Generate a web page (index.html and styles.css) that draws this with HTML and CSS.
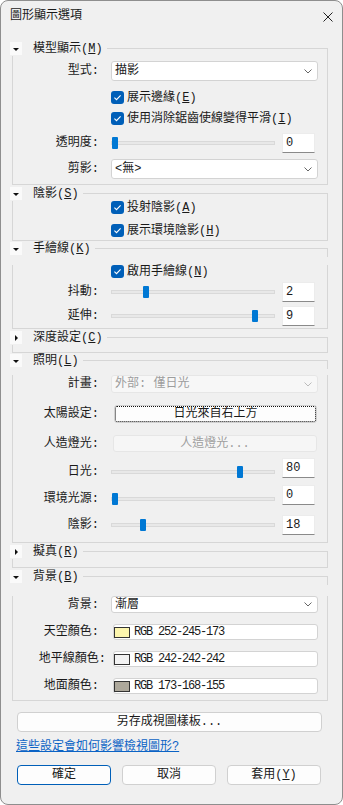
FILE: index.html
```html
<!DOCTYPE html>
<html lang="zh-Hant">
<head>
  <meta charset="UTF-8" />
  <meta name="viewport" content="width=device-width, initial-scale=1.0"/>
  <title>圖形顯示選項</title>
  <link rel="stylesheet" href="styles.css">
</head>
<body>
  <div class="win">
    <!-- 標題列 -->
    <div class="titlebar">
      <span>圖形顯示選項</span>
      <svg class="close" width="10" height="10" viewBox="0 0 10 10"><path d="M0.5 0.5 L9.5 9.5 M9.5 0.5 L0.5 9.5" stroke="#222" stroke-width="1"/></svg>
    </div>

    <div class="content">
      <!-- 模型顯示 -->
      <section class="grp g1">
        <div class="grp-head">
          <span class="twisty"><i class="tri-down"></i></span>
          <span class="grp-title">模型顯示(<u>M</u>)</span>
          <span class="grp-line"></span>
        </div>
        <div class="grp-body">
          <div class="row h20">
            <span class="lbl">型式:</span>
            <div class="combo">描影<svg class="chev" width="8" height="5" viewBox="0 0 8 5"><path d="M0.5 0.5 L4 4 L7.5 0.5" fill="none" stroke="#666"/></svg></div>
          </div>
          <div class="row chk mt10">
            <span class="cb"><svg width="13" height="13" viewBox="0 0 13 13"><path d="M3.4 6.7 L5.5 8.7 L9.6 4.3" fill="none" stroke="#fff" stroke-width="1.1"/></svg></span>
            展示邊緣(<u>E</u>)
          </div>
          <div class="row chk mt8">
            <span class="cb"><svg width="13" height="13" viewBox="0 0 13 13"><path d="M3.4 6.7 L5.5 8.7 L9.6 4.3" fill="none" stroke="#fff" stroke-width="1.1"/></svg></span>
            使用消除鋸齒使線變得平滑(<u>I</u>)
          </div>
          <div class="row h20 mt8">
            <span class="lbl">透明度:</span>
            <div class="slider"><div class="track"></div><div class="thumb" style="--v:0"></div></div>
            <div class="num">0</div>
          </div>
          <div class="row h20 mt6">
            <span class="lbl">剪影:</span>
            <div class="combo">&lt;無&gt;<svg class="chev" width="8" height="5" viewBox="0 0 8 5"><path d="M0.5 0.5 L4 4 L7.5 0.5" fill="none" stroke="#666"/></svg></div>
          </div>
        </div>
      </section>

      <!-- 陰影 -->
      <section class="grp g2">
        <div class="grp-head">
          <span class="twisty"><i class="tri-down"></i></span>
          <span class="grp-title">陰影(<u>S</u>)</span>
          <span class="grp-line"></span>
        </div>
        <div class="grp-body">
          <div class="row chk">
            <span class="cb"><svg width="13" height="13" viewBox="0 0 13 13"><path d="M3.4 6.7 L5.5 8.7 L9.6 4.3" fill="none" stroke="#fff" stroke-width="1.1"/></svg></span>
            投射陰影(<u>A</u>)
          </div>
          <div class="row chk mt10">
            <span class="cb"><svg width="13" height="13" viewBox="0 0 13 13"><path d="M3.4 6.7 L5.5 8.7 L9.6 4.3" fill="none" stroke="#fff" stroke-width="1.1"/></svg></span>
            展示環境陰影(<u>H</u>)
          </div>
        </div>
      </section>

      <!-- 手繪線 -->
      <section class="grp g3">
        <div class="grp-head">
          <span class="twisty"><i class="tri-down"></i></span>
          <span class="grp-title">手繪線(<u>K</u>)</span>
          <span class="grp-line"></span>
        </div>
        <div class="grp-body">
          <div class="row chk mt9">
            <span class="cb"><svg width="13" height="13" viewBox="0 0 13 13"><path d="M3.4 6.7 L5.5 8.7 L9.6 4.3" fill="none" stroke="#fff" stroke-width="1.1"/></svg></span>
            啟用手繪線(<u>N</u>)
          </div>
          <div class="row h20 mt4">
            <span class="lbl">抖動:</span>
            <div class="slider"><div class="track"></div><div class="thumb" style="--v:0.2"></div></div>
            <div class="num">2</div>
          </div>
          <div class="row h20 mt4">
            <span class="lbl">延伸:</span>
            <div class="slider"><div class="track"></div><div class="thumb" style="--v:0.9"></div></div>
            <div class="num">9</div>
          </div>
        </div>
      </section>

      <!-- 深度設定 (收合) -->
      <section class="grp g4">
        <div class="grp-head">
          <span class="twisty"><i class="tri-right"></i></span>
          <span class="grp-title">深度設定(<u>C</u>)</span>
          <span class="grp-line"></span>
        </div>
        <div class="grp-body empty"></div>
      </section>

      <!-- 照明 -->
      <section class="grp g5">
        <div class="grp-head">
          <span class="twisty"><i class="tri-down"></i></span>
          <span class="grp-title">照明(<u>L</u>)</span>
          <span class="grp-line"></span>
        </div>
        <div class="grp-body">
          <div class="row h18 mt7">
            <span class="lbl">計畫:</span>
            <div class="combo off">外部: 僅日光<svg class="chev" width="8" height="5" viewBox="0 0 8 5"><path d="M0.5 0.5 L4 4 L7.5 0.5" fill="none" stroke="#bbb"/></svg></div>
          </div>
          <div class="row h18 mt12">
            <span class="lbl">太陽設定:</span>
            <div class="btn focus">日光來自右上方</div>
          </div>
          <div class="row h17 mt12">
            <span class="lbl">人造燈光:</span>
            <div class="btn off">人造燈光...</div>
          </div>
          <div class="row mt6">
            <span class="lbl">日光:</span>
            <div class="slider"><div class="track"></div><div class="thumb" style="--v:0.8"></div></div>
            <div class="num up8">80</div>
          </div>
          <div class="row mt-1">
            <span class="lbl">環境光源:</span>
            <div class="slider"><div class="track"></div><div class="thumb" style="--v:0"></div></div>
            <div class="num up7">0</div>
          </div>
          <div class="row h20 mt3">
            <span class="lbl">陰影:</span>
            <div class="slider"><div class="track"></div><div class="thumb" style="--v:0.18"></div></div>
            <div class="num">18</div>
          </div>
        </div>
      </section>

      <!-- 擬真 (收合) -->
      <section class="grp g6">
        <div class="grp-head">
          <span class="twisty"><i class="tri-right"></i></span>
          <span class="grp-title">擬真(<u>R</u>)</span>
          <span class="grp-line"></span>
        </div>
        <div class="grp-body empty"></div>
      </section>

      <!-- 背景 -->
      <section class="grp g7">
        <div class="grp-head">
          <span class="twisty"><i class="tri-down"></i></span>
          <span class="grp-title">背景(<u>B</u>)</span>
          <span class="grp-line"></span>
        </div>
        <div class="grp-body">
          <div class="row h17 mt12">
            <span class="lbl">背景:</span>
            <div class="combo">漸層<svg class="chev" width="8" height="5" viewBox="0 0 8 5"><path d="M0.5 0.5 L4 4 L7.5 0.5" fill="none" stroke="#666"/></svg></div>
          </div>
          <div class="row h16 mt11">
            <span class="lbl">天空顏色:</span>
            <div class="color"><span class="sw" style="background:rgb(252,245,173)"></span>RGB 252-245-173</div>
          </div>
          <div class="row h16 mt11">
            <span class="lbl over">地平線顏色:</span>
            <div class="color"><span class="sw" style="background:rgb(242,242,242)"></span>RGB 242-242-242</div>
          </div>
          <div class="row h16 mt11">
            <span class="lbl">地面顏色:</span>
            <div class="color"><span class="sw" style="background:rgb(173,168,155)"></span>RGB 173-168-155</div>
          </div>
        </div>
      </section>

      <div class="btn save">另存成視圖樣板...</div>
      <a class="help" href="#">這些設定會如何影響檢視圖形?</a>

      <div class="actions">
        <div class="btn primary">確定</div>
        <div class="btn">取消</div>
        <div class="btn">套用(<u>Y</u>)</div>
      </div>
    </div>
  </div>
</body>
</html>
```

FILE: styles.css
```css
:root {
  --bg: #f0f0f0;
  --line: #d6d6d6;
  --blue: #005fb8;
  --thumb: #0078d4;
  --text: #1a1a1a;
}
body {
  margin: 0;
  font-family: "Liberation Mono", "Noto Sans CJK TC", monospace;
  font-size: 12px;
  line-height: 14px;
  color: var(--text);
  background: #fff;
}
u {
  text-decoration: underline;
  text-underline-offset: 1px;
}
/* 視窗外框 */
.win {
  width: 343px;
  height: 805px;
  box-sizing: border-box;
  border: 1px solid #8e8e8e;
  border-radius: 8px;
  background: var(--bg);
  overflow: hidden;
}
.titlebar {
  height: 30px;
  display: flex;
  align-items: center;
  justify-content: space-between;
  padding: 0 9px 0 9px;
  font-size: 12px;
}
.close {
  margin-top: 2px;
}
.content {
  padding: 11px 14px 0 11px;
}
/* 群組框 */
.grp.g2, .grp.g4, .grp.g6, .grp.g7 { margin-top: 2px; }
.grp.g3, .grp.g5 { margin-top: 1px; }
.grp-head {
  display: flex;
  align-items: flex-start;
  height: 14px;
  margin-left: -2px;
}
.twisty {
  width: 12px;
  height: 13px;
  background: #fafafa;
  display: flex;
  align-items: center;
  justify-content: center;
}
.tri-down {
  width: 0;
  height: 0;
  border-left: 3px solid transparent;
  border-right: 3px solid transparent;
  border-top: 3px solid #111;
  margin-top: 2px;
}
.tri-right {
  width: 0;
  height: 0;
  border-top: 3px solid transparent;
  border-bottom: 3px solid transparent;
  border-left: 3px solid #111;
  margin-left: 1px;
}
.grp-title {
  margin-left: 11px;
  white-space: nowrap;
}
.grp-line {
  flex: 1;
  margin-left: 4px;
  margin-top: 6px;
  height: 8px;
  border-top: 1px solid var(--line);
  border-right: 1px solid var(--line);
}
.grp-body {
  border: 1px solid var(--line);
  border-top: none;
}
.g1 .grp-body { padding: 5px 0 5px 0; }
.g2 .grp-body { padding: 0 0 3px 0; }
.g3 .grp-body { padding: 0 0 2px 0; }
.g5 .grp-body { padding: 0 0 7px 0; }
.g7 .grp-body { padding: 0 0 6px 0; }
.g4 .grp-body.empty { height: 7px; }
.g6 .grp-body.empty { height: 8px; }

/* 列 */
.row {
  display: flex;
  align-items: center;
  padding-right: 9px;
}
.h20 { height: 20px; }
.h18 { height: 18px; }
.h17 { height: 17px; }
.h16 { height: 16px; }
.mt3 { margin-top: 3px; }
.mt4 { margin-top: 4px; }
.mt6 { margin-top: 6px; }
.mt7 { margin-top: 7px; }
.mt8 { margin-top: 8px; }
.mt9 { margin-top: 9px; }
.mt10 { margin-top: 10px; }
.mt11 { margin-top: 11px; }
.mt12 { margin-top: 12px; }
.mt-1 { margin-top: -1px; }
.lbl {
  width: 86px;
  flex: none;
  text-align: right;
  white-space: nowrap;
}
.lbl.over {
  width: 93px;
  margin-right: -7px;
}
.chk {
  height: 13px;
  padding-left: 98px;
}
.cb {
  width: 13px;
  height: 13px;
  border-radius: 3px;
  background: var(--blue);
  margin-right: 3px;
  display: flex;
}
/* 下拉選單 */
.combo {
  flex: 1;
  align-self: stretch;
  margin-left: 12px;
  background: #fff;
  border: 1px solid #d3d3d3;
  border-radius: 3px;
  display: flex;
  align-items: center;
  justify-content: space-between;
  padding: 0 5px 0 3px;
}
.combo.off {
  background: #f7f7f7;
  border-color: #e6e6e6;
  color: #9d9d9d;
}
/* 滑桿 */
.slider {
  flex: 1;
  position: relative;
  height: 12px;
  margin-left: 12px;
}
.track {
  position: absolute;
  left: 0;
  right: 0;
  top: 4px;
  height: 4px;
  box-sizing: border-box;
  background: #e8e8e8;
  border: 1px solid #d9d9d9;
}
.thumb {
  position: absolute;
  top: 0;
  width: 6px;
  height: 12px;
  border-radius: 1px;
  background: var(--thumb);
  left: calc(var(--v) * (100% - 8px) + 1px);
}
.num {
  width: 33px;
  height: 20px;
  box-sizing: border-box;
  margin-left: 7px;
  margin-right: 3px;
  background: #fff;
  border: 1px solid #ececec;
  border-bottom-color: #8a8a8a;
  padding: 2px 3px;
  line-height: 14px;
}
.num.up8 { margin-bottom: 8px; }
.num.up7 { margin-bottom: 7px; }
/* 按鈕 */
.btn {
  background: #fdfdfd;
  border: 1px solid #d0d0d0;
  border-radius: 4px;
  display: flex;
  align-items: center;
  justify-content: center;
  box-sizing: border-box;
}
.row .btn {
  flex: 1;
  align-self: stretch;
  margin-left: 14px;
  margin-right: 1px;
  border-radius: 3px;
}
.row .btn.focus {
  margin-left: 15px;
  outline: 1px dotted #111;
  outline-offset: -2px;
}
.btn.off {
  background: #f6f6f6;
  border-color: #e6e6e6;
  color: #9f9f9f;
}
/* 顏色欄位 */
.color {
  flex: 1;
  align-self: stretch;
  margin-left: 14px;
  background: #fff;
  border: 1px solid #d3d3d3;
  border-radius: 3px;
  display: flex;
  align-items: center;
  letter-spacing: -1.2px;
}
.sw {
  width: 16px;
  height: 11px;
  box-sizing: border-box;
  border: 1px solid #333;
  margin: 0 4px 0 0;
}
/* 底部 */
.save {
  height: 20px;
  margin: 11px 6px 0 5px;
}
.help {
  display: block;
  margin: 8px 0 0 4px;
  color: #0b63c5;
  text-decoration: underline;
  width: max-content;
}
.actions {
  display: flex;
  gap: 11px;
  margin: 11px 6px 0 5px;
}
.actions .btn {
  width: 94px;
  height: 20px;
}
.actions .primary {
  border-color: var(--blue);
}
```
